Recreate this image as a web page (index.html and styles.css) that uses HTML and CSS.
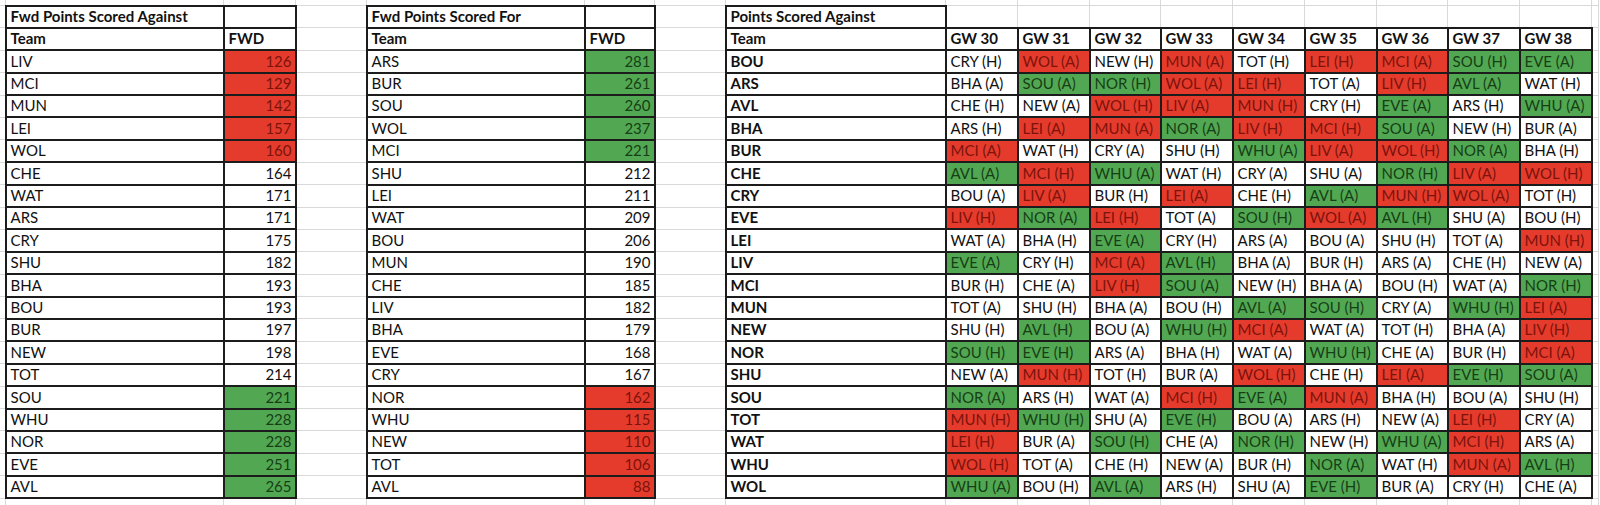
FILE: index.html
```html
<!DOCTYPE html>
<html>
<head>
<meta charset="utf-8">
<link rel="stylesheet" href="styles.css">
</head>
<body>
<table class="sheet">
<colgroup>
<col class="w-edge"><col class="w-team"><col class="w-num"><col class="w-gap"><col class="w-team"><col class="w-num2"><col class="w-gap"><col class="w-team3">
<col class="w-gw"><col class="w-gw"><col class="w-gw2"><col class="w-gw"><col class="w-gw"><col class="w-gw"><col class="w-gw2"><col class="w-gw"><col class="w-gw"><col class="w-end">
</colgroup>
<tr class="edge-top"><td></td><td></td><td></td><td></td><td></td><td></td><td></td><td></td><td></td><td></td><td></td><td></td><td></td><td></td><td></td><td></td><td></td><td></td></tr>
<tr><td></td><td class="c bold">Fwd Points Scored Against</td><td class="c"></td><td></td><td class="c bold">Fwd Points Scored For</td><td class="c"></td><td></td><td class="c bold">Points Scored Against</td><td></td><td></td><td></td><td></td><td></td><td></td><td></td><td></td><td></td><td></td></tr>
<tr><td></td><td class="c bold">Team</td><td class="c bold">FWD</td><td></td><td class="c bold">Team</td><td class="c bold">FWD</td><td></td><td class="c bold">Team</td><td class="c bold">GW 30</td><td class="c bold">GW 31</td><td class="c bold">GW 32</td><td class="c bold">GW 33</td><td class="c bold">GW 34</td><td class="c bold">GW 35</td><td class="c bold">GW 36</td><td class="c bold">GW 37</td><td class="c bold">GW 38</td><td></td></tr>
<tr><td></td><td class="c">LIV</td><td class="c num red">126</td><td></td><td class="c">ARS</td><td class="c num grn">281</td><td></td><td class="c bold">BOU</td><td class="c">CRY (H)</td><td class="c red">WOL (A)</td><td class="c">NEW (H)</td><td class="c red">MUN (A)</td><td class="c">TOT (H)</td><td class="c red">LEI (H)</td><td class="c red">MCI (A)</td><td class="c grn">SOU (H)</td><td class="c grn">EVE (A)</td><td></td></tr>
<tr><td></td><td class="c">MCI</td><td class="c num red">129</td><td></td><td class="c">BUR</td><td class="c num grn">261</td><td></td><td class="c bold">ARS</td><td class="c">BHA (A)</td><td class="c grn">SOU (A)</td><td class="c grn">NOR (H)</td><td class="c red">WOL (A)</td><td class="c red">LEI (H)</td><td class="c">TOT (A)</td><td class="c red">LIV (H)</td><td class="c grn">AVL (A)</td><td class="c">WAT (H)</td><td></td></tr>
<tr><td></td><td class="c">MUN</td><td class="c num red">142</td><td></td><td class="c">SOU</td><td class="c num grn">260</td><td></td><td class="c bold">AVL</td><td class="c">CHE (H)</td><td class="c">NEW (A)</td><td class="c red">WOL (H)</td><td class="c red">LIV (A)</td><td class="c red">MUN (H)</td><td class="c">CRY (H)</td><td class="c grn">EVE (A)</td><td class="c">ARS (H)</td><td class="c grn">WHU (A)</td><td></td></tr>
<tr><td></td><td class="c">LEI</td><td class="c num red">157</td><td></td><td class="c">WOL</td><td class="c num grn">237</td><td></td><td class="c bold">BHA</td><td class="c">ARS (H)</td><td class="c red">LEI (A)</td><td class="c red">MUN (A)</td><td class="c grn">NOR (A)</td><td class="c red">LIV (H)</td><td class="c red">MCI (H)</td><td class="c grn">SOU (A)</td><td class="c">NEW (H)</td><td class="c">BUR (A)</td><td></td></tr>
<tr><td></td><td class="c">WOL</td><td class="c num red">160</td><td></td><td class="c">MCI</td><td class="c num grn">221</td><td></td><td class="c bold">BUR</td><td class="c red">MCI (A)</td><td class="c">WAT (H)</td><td class="c">CRY (A)</td><td class="c">SHU (H)</td><td class="c grn">WHU (A)</td><td class="c red">LIV (A)</td><td class="c red">WOL (H)</td><td class="c grn">NOR (A)</td><td class="c">BHA (H)</td><td></td></tr>
<tr><td></td><td class="c">CHE</td><td class="c num">164</td><td></td><td class="c">SHU</td><td class="c num">212</td><td></td><td class="c bold">CHE</td><td class="c grn">AVL (A)</td><td class="c red">MCI (H)</td><td class="c grn">WHU (A)</td><td class="c">WAT (H)</td><td class="c">CRY (A)</td><td class="c">SHU (A)</td><td class="c grn">NOR (H)</td><td class="c red">LIV (A)</td><td class="c red">WOL (H)</td><td></td></tr>
<tr><td></td><td class="c">WAT</td><td class="c num">171</td><td></td><td class="c">LEI</td><td class="c num">211</td><td></td><td class="c bold">CRY</td><td class="c">BOU (A)</td><td class="c red">LIV (A)</td><td class="c">BUR (H)</td><td class="c red">LEI (A)</td><td class="c">CHE (H)</td><td class="c grn">AVL (A)</td><td class="c red">MUN (H)</td><td class="c red">WOL (A)</td><td class="c">TOT (H)</td><td></td></tr>
<tr><td></td><td class="c">ARS</td><td class="c num">171</td><td></td><td class="c">WAT</td><td class="c num">209</td><td></td><td class="c bold">EVE</td><td class="c red">LIV (H)</td><td class="c grn">NOR (A)</td><td class="c red">LEI (H)</td><td class="c">TOT (A)</td><td class="c grn">SOU (H)</td><td class="c red">WOL (A)</td><td class="c grn">AVL (H)</td><td class="c">SHU (A)</td><td class="c">BOU (H)</td><td></td></tr>
<tr><td></td><td class="c">CRY</td><td class="c num">175</td><td></td><td class="c">BOU</td><td class="c num">206</td><td></td><td class="c bold">LEI</td><td class="c">WAT (A)</td><td class="c">BHA (H)</td><td class="c grn">EVE (A)</td><td class="c">CRY (H)</td><td class="c">ARS (A)</td><td class="c">BOU (A)</td><td class="c">SHU (H)</td><td class="c">TOT (A)</td><td class="c red">MUN (H)</td><td></td></tr>
<tr><td></td><td class="c">SHU</td><td class="c num">182</td><td></td><td class="c">MUN</td><td class="c num">190</td><td></td><td class="c bold">LIV</td><td class="c grn">EVE (A)</td><td class="c">CRY (H)</td><td class="c red">MCI (A)</td><td class="c grn">AVL (H)</td><td class="c">BHA (A)</td><td class="c">BUR (H)</td><td class="c">ARS (A)</td><td class="c">CHE (H)</td><td class="c">NEW (A)</td><td></td></tr>
<tr><td></td><td class="c">BHA</td><td class="c num">193</td><td></td><td class="c">CHE</td><td class="c num">185</td><td></td><td class="c bold">MCI</td><td class="c">BUR (H)</td><td class="c">CHE (A)</td><td class="c red">LIV (H)</td><td class="c grn">SOU (A)</td><td class="c">NEW (H)</td><td class="c">BHA (A)</td><td class="c">BOU (H)</td><td class="c">WAT (A)</td><td class="c grn">NOR (H)</td><td></td></tr>
<tr><td></td><td class="c">BOU</td><td class="c num">193</td><td></td><td class="c">LIV</td><td class="c num">182</td><td></td><td class="c bold">MUN</td><td class="c">TOT (A)</td><td class="c">SHU (H)</td><td class="c">BHA (A)</td><td class="c">BOU (H)</td><td class="c grn">AVL (A)</td><td class="c grn">SOU (H)</td><td class="c">CRY (A)</td><td class="c grn">WHU (H)</td><td class="c red">LEI (A)</td><td></td></tr>
<tr><td></td><td class="c">BUR</td><td class="c num">197</td><td></td><td class="c">BHA</td><td class="c num">179</td><td></td><td class="c bold">NEW</td><td class="c">SHU (H)</td><td class="c grn">AVL (H)</td><td class="c">BOU (A)</td><td class="c grn">WHU (H)</td><td class="c red">MCI (A)</td><td class="c">WAT (A)</td><td class="c">TOT (H)</td><td class="c">BHA (A)</td><td class="c red">LIV (H)</td><td></td></tr>
<tr><td></td><td class="c">NEW</td><td class="c num">198</td><td></td><td class="c">EVE</td><td class="c num">168</td><td></td><td class="c bold">NOR</td><td class="c grn">SOU (H)</td><td class="c grn">EVE (H)</td><td class="c">ARS (A)</td><td class="c">BHA (H)</td><td class="c">WAT (A)</td><td class="c grn">WHU (H)</td><td class="c">CHE (A)</td><td class="c">BUR (H)</td><td class="c red">MCI (A)</td><td></td></tr>
<tr><td></td><td class="c">TOT</td><td class="c num">214</td><td></td><td class="c">CRY</td><td class="c num">167</td><td></td><td class="c bold">SHU</td><td class="c">NEW (A)</td><td class="c red">MUN (H)</td><td class="c">TOT (H)</td><td class="c">BUR (A)</td><td class="c red">WOL (H)</td><td class="c">CHE (H)</td><td class="c red">LEI (A)</td><td class="c grn">EVE (H)</td><td class="c grn">SOU (A)</td><td></td></tr>
<tr><td></td><td class="c">SOU</td><td class="c num grn">221</td><td></td><td class="c">NOR</td><td class="c num red">162</td><td></td><td class="c bold">SOU</td><td class="c grn">NOR (A)</td><td class="c">ARS (H)</td><td class="c">WAT (A)</td><td class="c red">MCI (H)</td><td class="c grn">EVE (A)</td><td class="c red">MUN (A)</td><td class="c">BHA (H)</td><td class="c">BOU (A)</td><td class="c">SHU (H)</td><td></td></tr>
<tr><td></td><td class="c">WHU</td><td class="c num grn">228</td><td></td><td class="c">WHU</td><td class="c num red">115</td><td></td><td class="c bold">TOT</td><td class="c red">MUN (H)</td><td class="c grn">WHU (H)</td><td class="c">SHU (A)</td><td class="c grn">EVE (H)</td><td class="c">BOU (A)</td><td class="c">ARS (H)</td><td class="c">NEW (A)</td><td class="c red">LEI (H)</td><td class="c">CRY (A)</td><td></td></tr>
<tr><td></td><td class="c">NOR</td><td class="c num grn">228</td><td></td><td class="c">NEW</td><td class="c num red">110</td><td></td><td class="c bold">WAT</td><td class="c red">LEI (H)</td><td class="c">BUR (A)</td><td class="c grn">SOU (H)</td><td class="c">CHE (A)</td><td class="c grn">NOR (H)</td><td class="c">NEW (H)</td><td class="c grn">WHU (A)</td><td class="c red">MCI (H)</td><td class="c">ARS (A)</td><td></td></tr>
<tr><td></td><td class="c">EVE</td><td class="c num grn">251</td><td></td><td class="c">TOT</td><td class="c num red">106</td><td></td><td class="c bold">WHU</td><td class="c red">WOL (H)</td><td class="c">TOT (A)</td><td class="c">CHE (H)</td><td class="c">NEW (A)</td><td class="c">BUR (H)</td><td class="c grn">NOR (A)</td><td class="c">WAT (H)</td><td class="c red">MUN (A)</td><td class="c grn">AVL (H)</td><td></td></tr>
<tr><td></td><td class="c">AVL</td><td class="c num grn">265</td><td></td><td class="c">AVL</td><td class="c num red">88</td><td></td><td class="c bold">WOL</td><td class="c grn">WHU (A)</td><td class="c">BOU (H)</td><td class="c grn">AVL (A)</td><td class="c">ARS (H)</td><td class="c">SHU (A)</td><td class="c grn">EVE (H)</td><td class="c">BUR (A)</td><td class="c">CRY (H)</td><td class="c">CHE (A)</td><td></td></tr>
<tr class="edge-bottom"><td></td><td></td><td></td><td></td><td></td><td></td><td></td><td></td><td></td><td></td><td></td><td></td><td></td><td></td><td></td><td></td><td></td><td></td></tr>
</table>
</body>
</html>
```
FILE: styles.css
```css
html, body {
  margin: 0;
  padding: 0;
  background: #ffffff;
  overflow: hidden;
}
.sheet {
  border-collapse: collapse;
  table-layout: fixed;
  width: 1600px;
  margin-top: -1px;
  margin-left: -1px;
  font-family: "Lato", "Open Sans", sans-serif;
  font-size: 15px;
  color: #111;
}
.w-edge { width: 6px; }
.w-team { width: 218px; }
.w-num { width: 72px; }
.w-num2 { width: 70px; }
.w-gap { width: 71px; }
.w-team3 { width: 220px; }
.w-gw { width: 72px; }
.w-gw2 { width: 71px; }
.w-end { width: 7px; }
.sheet tr { height: 22.4px; }
.sheet tr.edge-top { height: 6px; }
.sheet tr.edge-bottom { height: 10px; }
.sheet td {
  border: 1px solid #d9d9d9;
  padding: 0 3px 1px 4px;
  vertical-align: bottom;
  line-height: 19px;
  white-space: nowrap;
  overflow: hidden;
}
.sheet td.c {
  border: 2px solid #1c1c1c;
}
.sheet td.bold { font-weight: 700; }
.sheet td.num { text-align: right; }
.sheet td.red {
  background: #e53b2c;
  color: #7d130b;
}
.sheet td.grn {
  background: #52a852;
  color: #163f16;
}
```
